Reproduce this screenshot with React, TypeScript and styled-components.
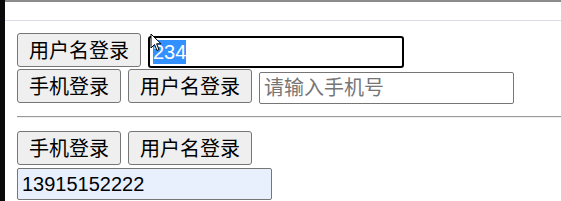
import React from "react";
import styled, { createGlobalStyle } from "styled-components";

const Global = createGlobalStyle`
  html, body { margin: 0; padding: 0; background: #fff; }
  body { font-family: "Liberation Sans", "Noto Sans CJK SC", sans-serif; overflow: hidden; }
  * { box-sizing: border-box; }
`;

const Shell = styled.div`
  display: flex;
  width: 561px;
  height: 201px;
  overflow: hidden;
`;

const SideStrip = styled.div`
  width: 5px;
  flex: none;
  background: #0a0a0a;
`;

const Main = styled.div`
  flex: 1;
  display: flex;
  flex-direction: column;
  position: relative;
`;

const TopBar = styled.div`
  height: 21px;
  flex: none;
  border-top: 2px solid #8c8c8c;
  border-bottom: 1px solid #dcdce6;
`;

const Content = styled.div`
  padding: 12px 0 0 12px;
  display: flex;
  flex-direction: column;
`;

const Row = styled.div<{ $top?: number }>`
  display: flex;
  align-items: flex-start;
  gap: 7px;
  margin-top: ${(p) => p.$top ?? 0}px;
`;

const Button = styled.button`
  height: 34px;
  padding: 0 11px;
  border: 1px solid #767676;
  border-radius: 3px;
  background: #efefef;
  color: #000;
  font-family: "Noto Sans CJK SC", sans-serif;
  font-size: 20px;
  line-height: 32px;
  white-space: nowrap;
`;

const FakeFocusedInput = styled.div`
  width: 256px;
  height: 32px;
  margin-top: 3px;
  border: 2px solid #000;
  border-radius: 3px;
  padding: 0 0 0 3px;
  display: flex;
  align-items: center;
  font-family: "Liberation Sans", sans-serif;
  font-size: 20px;
  background: #fff;
`;

const Selected = styled.span`
  background: #3390ff;
  color: #fff;
  line-height: 24px;
`;

const TextInput = styled.input<{ $filled?: boolean; $top?: number }>`
  width: 255px;
  height: 32px;
  margin-top: ${(p) => p.$top ?? 0}px;
  border: 1px solid #767676;
  border-radius: 2px;
  padding: 0 0 0 4px;
  font-family: "Liberation Sans", "Noto Sans CJK SC", sans-serif;
  font-size: 20px;
  color: #000;
  background: ${(p) => (p.$filled ? "#e8f0fe" : "#fff")};
  outline: none;
  &::placeholder {
    color: #767676;
    font-family: "Noto Sans CJK SC", sans-serif;
  }
`;

const Divider = styled.hr`
  margin: 12px 0 0 0;
  border: none;
  border-top: 1px solid #9a9a9a;
  border-bottom: 1px solid #eeeeee;
  height: 0;
`;

const Cursor = styled.svg`
  position: absolute;
  left: 145px;
  top: 33px;
  pointer-events: none;
`;

export default function App() {
  return (
    <>
      <Global />
      <Shell>
        <SideStrip />
        <Main>
          <TopBar />
          <Content>
            <Row>
              <Button>用户名登录</Button>
              <FakeFocusedInput>
                <Selected>234</Selected>
              </FakeFocusedInput>
            </Row>
            <Row $top={1}>
              <Button>手机登录</Button>
              <Button>用户名登录</Button>
              <TextInput placeholder="请输入手机号" $top={3} readOnly />
            </Row>
            <Divider />
            <Row $top={13}>
              <Button>手机登录</Button>
              <Button>用户名登录</Button>
            </Row>
            <Row $top={3}>
              <TextInput $filled defaultValue="13915152222" readOnly />
            </Row>
          </Content>
          <Cursor width="12" height="19" viewBox="0 0 12 19">
            <path
              d="M1 1 L1 15 L4.5 11.5 L7 17.5 L9 16.6 L6.6 10.8 L11 10.8 Z"
              fill="#fff"
              stroke="#000"
              strokeWidth="1"
              strokeLinejoin="round"
            />
          </Cursor>
        </Main>
      </Shell>
    </>
  );
}
